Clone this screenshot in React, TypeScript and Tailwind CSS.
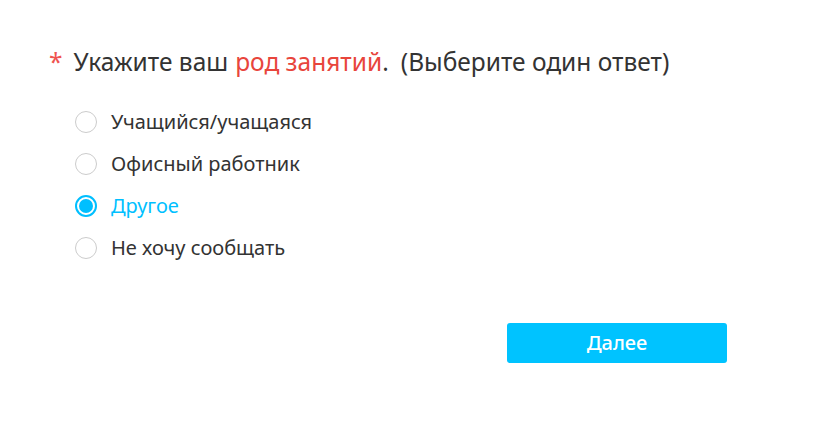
import { useState } from "react";

const options = [
  "Учащийся/учащаяся",
  "Офисный работник",
  "Другое",
  "Не хочу сообщать",
];

export default function App() {
  const [selected, setSelected] = useState(2);

  return (
    <div
      className="min-h-screen w-full bg-white text-[#333333]"
      style={{ fontFamily: '"Noto Sans", "Open Sans", sans-serif' }}
    >
      <div className="pl-[49px] pt-[44px]">
        <div className="flex items-baseline text-[24.5px] leading-[36px]">
          <span className="mr-[11px] text-[#ef5350]">*</span>
          <span>Укажите ваш</span>
          <span className="ml-[7px] text-[#e8453c]">род занятий</span>
          <span>.</span>
          <span className="ml-[12px]">(Выберите один ответ)</span>
        </div>
        <div className="mt-[21px] flex flex-col pl-[26px]">
          {options.map((label, i) => {
            const active = i === selected;
            return (
              <button
                key={label}
                onClick={() => setSelected(i)}
                className="flex h-[42px] items-center gap-[14px] text-left"
              >
                <span
                  className={
                    active
                      ? "flex h-[22px] w-[22px] items-center justify-center rounded-full border-2 border-[#00bfff]"
                      : "h-[22px] w-[22px] rounded-full border border-[#cccccc]"
                  }
                >
                  {active && (
                    <span className="h-[14px] w-[14px] rounded-full bg-[#00bfff]" />
                  )}
                </span>
                <span
                  className={
                    active
                      ? "text-[20px] text-[#00bfff]"
                      : "text-[20px] text-[#333333]"
                  }
                >
                  {label}
                </span>
              </button>
            );
          })}
        </div>
        <div className="mt-[54px] flex pl-[458px]">
          <button className="h-[40px] w-[220px] rounded-[3px] bg-[#00c3ff] text-[20px] font-medium text-white">
            Далее
          </button>
        </div>
      </div>
    </div>
  );
}
